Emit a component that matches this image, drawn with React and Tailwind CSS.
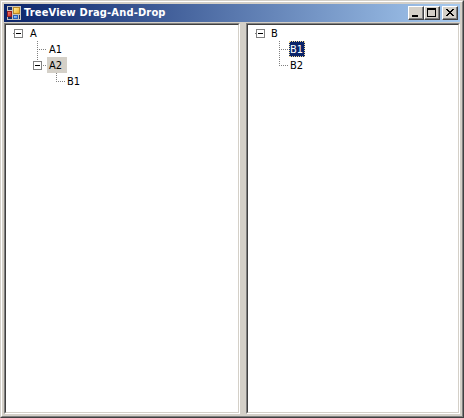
import React from 'react';

function Guide({ up, down, left, right, box }) {
  return (
    <svg width="19" height="16" viewBox="0 0 19 16" shapeRendering="crispEdges" className="shrink-0">
      <g stroke="#808080" strokeDasharray="1 1" fill="none">
        {up && <path d="M9.5 0V9" />}
        {down && <path d="M9.5 8V16" />}
        {right && <path d="M9 8.5H19" />}
        {left && <path d="M4 8.5H5" />}
      </g>
      {box && (
        <g>
          <rect x="5.5" y="4.5" width="8" height="8" fill="#fff" stroke="#808080" />
          <path d="M7 8.5H12" stroke="#000" />
        </g>
      )}
    </svg>
  );
}

function Row({ guides, label, state }) {
  const look =
    state === 'drop'
      ? 'bg-[#d4d0c8] text-black w-5'
      : state === 'selected'
        ? 'bg-[#0a246a] text-white w-4 outline-dotted outline-1 -outline-offset-1 outline-[#f5db95]'
        : 'text-black';
  const inset = label.startsWith('A') ? 'pl-[2px] ' : 'pl-px ';
  return (
    <div className="flex h-4">
      {guides.map((g, i) => (
        <Guide key={i} {...g} />
      ))}
      <span className={'h-4 whitespace-nowrap text-[11px] leading-[18px] ' + inset + look}>{label}</span>
    </div>
  );
}

function Tree({ rows, className }) {
  return (
    <div className={'border border-t-[#808080] border-l-[#808080] border-r-white border-b-white ' + className}>
      <div className="h-full border border-t-[#404040] border-l-[#404040] border-r-[#d4d0c8] border-b-[#d4d0c8] bg-white pl-[3px]">
        {rows.map((r, i) => (
          <Row key={i} {...r} />
        ))}
      </div>
    </div>
  );
}

function CaptionButton({ children }) {
  return (
    <div className="h-[14px] w-4 border border-t-white border-l-white border-r-[#404040] border-b-[#404040]">
      <div className="h-3 w-[14px] border-r border-b border-[#808080] bg-[#d4d0c8]">
        <svg width="13" height="11" viewBox="0 0 13 11" shapeRendering="crispEdges" className="block">
          {children}
        </svg>
      </div>
    </div>
  );
}

const left = [
  { guides: [{ left: true, box: true }], label: 'A' },
  { guides: [{}, { up: true, down: true, right: true }], label: 'A1' },
  { guides: [{}, { up: true, right: true, box: true }], label: 'A2', state: 'drop' },
  { guides: [{}, {}, { up: true, right: true }], label: 'B1' },
];

const right = [
  { guides: [{ left: true, box: true }], label: 'B' },
  { guides: [{}, { up: true, down: true, right: true }], label: 'B1', state: 'selected' },
  { guides: [{}, { up: true, right: true }], label: 'B2' },
];

export default function App() {
  return (
    <div className="h-[418px] w-[464px] border border-t-[#d4d0c8] border-l-[#d4d0c8] border-r-[#404040] border-b-[#404040] font-['DejaVu_Sans_Condensed','DejaVu_Sans',sans-serif]">
      <div className="flex h-full flex-col border border-t-white border-l-white border-r-[#808080] border-b-[#808080] bg-[#d4d0c8] p-[2px]">
        <div className="flex h-[18px] shrink-0 items-center bg-linear-to-r/srgb from-[#0a246a] to-[#a6caf0] pr-[2px] pl-[3px]">
          <svg width="14" height="14" viewBox="0 0 14 14" shapeRendering="crispEdges" className="shrink-0">
            <defs>
              <linearGradient id="gold" x2="1" y2="1">
                <stop stopColor="#fff4a8" />
                <stop offset="1" stopColor="#f0a818" />
              </linearGradient>
              <linearGradient id="blue" x2="1" y2="1">
                <stop stopColor="#b8dcff" />
                <stop offset="1" stopColor="#3478e0" />
              </linearGradient>
              <linearGradient id="red" x2="1" y2="1">
                <stop stopColor="#ff8878" />
                <stop offset="1" stopColor="#b81810" />
              </linearGradient>
            </defs>
            <path fill="#c8c4bc" d="M0 0H14V14H0Z" />
            <path fill="#17306f" d="M1 1H5V4H1ZM1 11H5V13H1ZM12 9H13V13H12Z" />
            <rect x="0.5" y="5.5" width="4" height="5" fill="url(#red)" stroke="#941c20" />
            <rect x="6.5" y="1.5" width="6" height="6" fill="url(#gold)" stroke="#b88828" />
            <rect x="6.5" y="9.5" width="4" height="3" fill="url(#blue)" stroke="#2860b8" />
          </svg>
          <span className="ml-[3px] flex-1 text-[11px] leading-[18px] font-bold tracking-[0.17px] whitespace-nowrap text-white">
            TreeView Drag-And-Drop
          </span>
          <div className="flex">
            <CaptionButton>
              <path d="M3 8H9V10H3Z" />
            </CaptionButton>
            <CaptionButton>
              <path fillRule="evenodd" d="M2 1H11V10H2ZM3 3V9H10V3Z" />
            </CaptionButton>
            <div className="ml-[2px]">
              <CaptionButton>
                <path d="M3 2h2v1h1v1h2v-1h1v-1h2v1h-1v1h-1v1h-1v1h1v1h1v1h1v1h-2v-1h-1v-1h-2v1h-1v1h-2v-1h1v-1h1v-1h1v-1h-1v-1h-1v-1h-1z" />
              </CaptionButton>
            </div>
          </div>
        </div>
        <div className="mt-px flex min-h-0 flex-1 gap-[6px]">
          <Tree rows={left} className="w-[236px]" />
          <Tree rows={right} className="w-[214px]" />
        </div>
      </div>
    </div>
  );
}
